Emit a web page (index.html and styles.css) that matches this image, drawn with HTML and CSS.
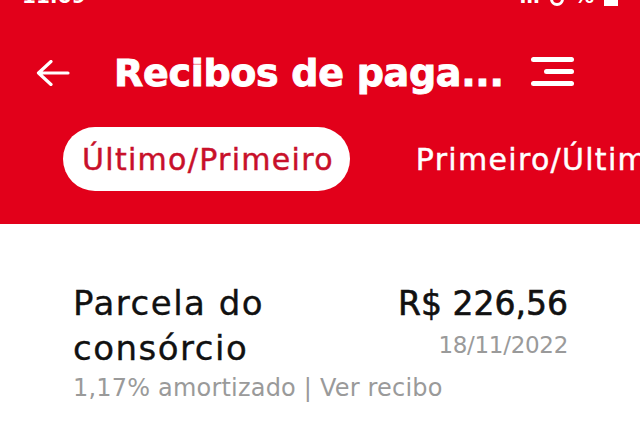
FILE: index.html
```html
<!DOCTYPE html>
<html lang="pt-BR">
<head>
<meta charset="utf-8">
<title>Recibos de pagamento</title>
<link rel="stylesheet" href="styles.css">
</head>
<body>
<header class="header">
  <div class="status">
    <span class="status-time">11:09</span>
    <span class="status-icons">
      <span class="sig">ıll</span>
      <span class="ring"></span>
      <span class="pct">%</span>
      <span class="batt"></span>
    </span>
  </div>
  <div class="toolbar">
    <button class="icon-btn back" aria-label="Voltar">
      <svg width="34" height="26" viewBox="0 0 34 26" fill="none" stroke="#fff" stroke-width="3.2" stroke-linecap="round" stroke-linejoin="round">
        <path d="M32 13H2.5M15 1.5L2.5 13L15 24.5"/>
      </svg>
    </button>
    <h1 class="title">Recibos de paga...</h1>
    <button class="icon-btn menu" aria-label="Menu">
      <span class="bar bar-full"></span>
      <span class="bar bar-short"></span>
      <span class="bar bar-full"></span>
    </button>
  </div>
  <nav class="tabs">
    <span class="tab tab-active">Último/Primeiro</span>
    <span class="tab">Primeiro/Último</span>
  </nav>
</header>
<main class="list">
  <div class="item">
    <div class="item-top">
      <div class="item-name">Parcela do<br>consórcio</div>
      <div class="item-right">
        <div class="item-value">R$ 226,56</div>
        <div class="item-date">18/11/2022</div>
      </div>
    </div>
    <div class="item-sub">1,17% amortizado | Ver recibo</div>
  </div>
</main>
</body>
</html>
```

FILE: styles.css
```css
* { box-sizing: border-box; }
html, body {
  margin: 0;
  padding: 0;
  width: 640px;
  height: 423px;
  overflow: hidden;
  background: #fff;
  font-family: "DejaVu Sans", "Noto Sans", sans-serif;
}
.header {
  background: #e2001a;
  height: 224px;
  color: #fff;
  overflow: hidden;
}
.status {
  height: 6px;
  overflow: hidden;
  display: flex;
  justify-content: space-between;
  padding: 0 22px 0 22px;
}
.status-time, .status-icons {
  margin-top: -15px;
  font-size: 20px;
  line-height: 20px;
  font-weight: 700;
  display: flex;
  align-items: flex-end;
  gap: 10px;
}
.ring {
  width: 14px; height: 14px;
  border: 3px solid #fff;
  border-radius: 50%;
}
.batt {
  width: 14px; height: 18px;
  background: #fff;
}
.toolbar {
  display: flex;
  align-items: center;
  height: 89px;
  padding: 45px 0 0 36px;
}
.icon-btn {
  background: none;
  border: 0;
  padding: 0;
  display: flex;
  cursor: pointer;
}
.back { width: 34px; }
.title {
  margin: 0 0 0 44px;
  width: 397px;
  font-size: 38px;
  line-height: 44px;
  font-weight: 700;
  letter-spacing: -0.3px;
  -webkit-text-stroke: 0.9px #fff;
  white-space: nowrap;
}
.menu {
  margin: -3px 0 0 20px;
  width: 43px;
  flex-direction: column;
  align-items: flex-end;
  gap: 6.5px;
}
.bar {
  display: block;
  height: 5.5px;
  background: #fff;
  border-radius: 3px;
}
.bar-full { width: 43px; }
.bar-short { width: 30px; }
.tabs {
  display: flex;
  align-items: center;
  gap: 66px;
  margin-top: 32px;
  padding-left: 63px;
  white-space: nowrap;
}
.tab {
  display: inline-flex;
  align-items: center;
  height: 64px;
  font-size: 30px;
  letter-spacing: 1.3px;
  color: #fff;
  -webkit-text-stroke: 0.45px #fff;
}
.tab-active {
  background: #fff;
  color: #c8102a;
  -webkit-text-stroke: 0.45px #c8102a;
  border-radius: 32px;
  padding: 0 16px 0 19px;
}
.list {
  padding: 57px 72px 0 73px;
}
.item-top {
  display: flex;
  justify-content: space-between;
}
.item-name {
  font-size: 34px;
  line-height: 45px;
  letter-spacing: 1.5px;
  color: #111;
  -webkit-text-stroke: 0.35px #111;
}
.item-right {
  text-align: right;
}
.item-value {
  font-size: 33px;
  line-height: 45px;
  color: #111;
  -webkit-text-stroke: 0.6px #111;
}
.item-date {
  font-size: 23px;
  line-height: 30px;
  letter-spacing: -0.3px;
  color: #9a9a9a;
  margin-top: 4px;
}
.item-sub {
  font-size: 24px;
  line-height: 30px;
  letter-spacing: 0.2px;
  color: #9a9a9a;
  margin-top: 2px;
}
```
